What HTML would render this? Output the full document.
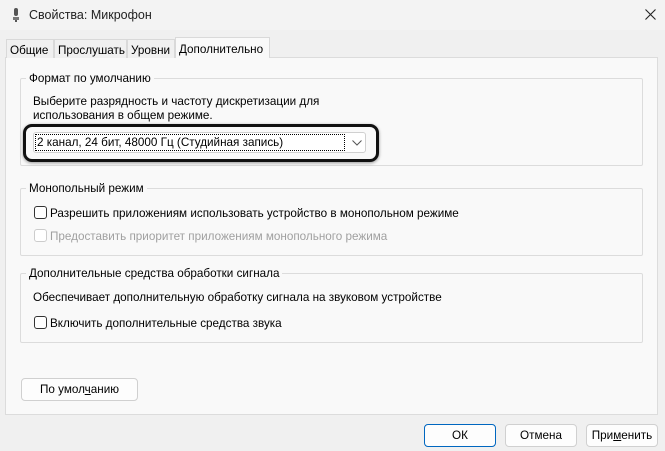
<!DOCTYPE html>
<html><head><meta charset="utf-8"><style>
*{box-sizing:border-box;margin:0;padding:0}
body{width:665px;height:451px;background:#f0f0f0;font-family:"Liberation Sans","DejaVu Sans",sans-serif;font-size:11.7px;color:#000;position:relative;overflow:hidden}
.a{position:absolute}
.t{position:absolute;margin-top:2px}
.title{left:0;top:0;width:665px;height:30px;background:#f3f3f3}
.tab{top:39px;height:19px;border:1px solid #d9d9d9;border-bottom:none;background:#f0f0f0;padding:4px 3px 0;white-space:nowrap}
.panel{left:5px;top:57px;width:653px;height:358px;background:#f9f9f9;border:1px solid #dcdcdc}
.grp{border:1px solid #dcdcdc;border-radius:2px}
.gt{background:#f9f9f9;padding:0 3px}
.cb{width:13px;height:13px;border:1px solid #333;border-radius:3px;background:#fff}
.btn{height:23px;border:1px solid #d0d0d0;border-radius:4px;background:#fdfdfd;text-align:center;line-height:22px}
</style></head><body>
<div class="a title"></div>
<svg class="a" style="left:11px;top:8px" width="10" height="14" viewBox="0 0 10 14"><rect x="3" y="0" width="4" height="8" rx="2" fill="#555"/><rect x="2" y="9" width="6" height="3" fill="#777"/><rect x="4" y="12" width="2" height="2" fill="#555"/></svg>
<div class="a" style="left:29px;top:8px;font-size:12.5px;color:#222">Свойства: Микрофон</div>
<svg class="a" style="left:645px;top:9px" width="11" height="11"><path d="M0.5 0.5L10.5 10.5M10.5 0.5L0.5 10.5" stroke="#222" stroke-width="1.1"/></svg>
<div class="a panel"></div>
<div class="a tab" style="left:6px;width:48px">Общие</div>
<div class="a tab" style="left:54px;width:73px">Прослушать</div>
<div class="a tab" style="left:127px;width:48px">Уровни</div>
<div class="a tab" style="left:175px;top:37px;height:21px;width:95px;background:#f9f9f9;padding-top:5px">Дополнительно</div>
<div class="a grp" style="left:20px;top:78px;width:623px;height:88px"></div>
<div class="t gt" style="left:26px;top:70px">Формат по умолчанию</div>
<div class="t" style="left:33px;top:93px;line-height:14px">Выберите разрядность и частоту дискретизации для<br>использования в общем режиме.</div>
<div class="a" style="left:23px;top:124px;width:356px;height:38px;border:3px solid #111;border-radius:9px;box-shadow:0 1px 3px rgba(0,0,0,.4)"></div>
<div class="a" style="left:33px;top:132px;width:333px;height:21px;border:1px solid #d0d0d0;border-radius:3px;background:#fff"></div>
<div class="a" style="left:35px;top:134px;width:310px;height:17px;border:1px dotted #000;padding-left:1px;line-height:16px">2 канал, 24 бит, 48000 Гц (Студийная запись)</div>
<svg class="a" style="left:352px;top:140px" width="10" height="6"><path d="M0.5 0.5L5 5L9.5 0.5" stroke="#555" fill="none"/></svg>
<div class="a grp" style="left:20px;top:188px;width:623px;height:68px"></div>
<div class="t gt" style="left:26px;top:180px">Монопольный режим</div>
<div class="a cb" style="left:34px;top:206px"></div>
<div class="t" style="left:50px;top:205px">Разрешить приложениям использовать устройство в монопольном режиме</div>
<div class="a cb" style="left:34px;top:229px;border-color:#ccc"></div>
<div class="t" style="left:50px;top:228px;color:#a0a0a0">Предоставить приоритет приложениям монопольного режима</div>
<div class="a grp" style="left:20px;top:273px;width:623px;height:70px"></div>
<div class="t gt" style="left:26px;top:265px">Дополнительные средства обработки сигнала</div>
<div class="t" style="left:33px;top:289px">Обеспечивает дополнительную обработку сигнала на звуковом устройстве</div>
<div class="a cb" style="left:34px;top:316px"></div>
<div class="t" style="left:50px;top:315px">Включить дополнительные средства звука</div>
<div class="a btn" style="left:21px;top:378px;width:117px">По умол<u>ч</u>анию</div>
<div class="a btn" style="left:424px;top:424px;width:72px;border-color:#0067c0">ОК</div>
<div class="a btn" style="left:505px;top:424px;width:72px">Отмена</div>
<div class="a btn" style="left:586px;top:424px;width:72px">При<u>м</u>енить</div>
</body></html>
